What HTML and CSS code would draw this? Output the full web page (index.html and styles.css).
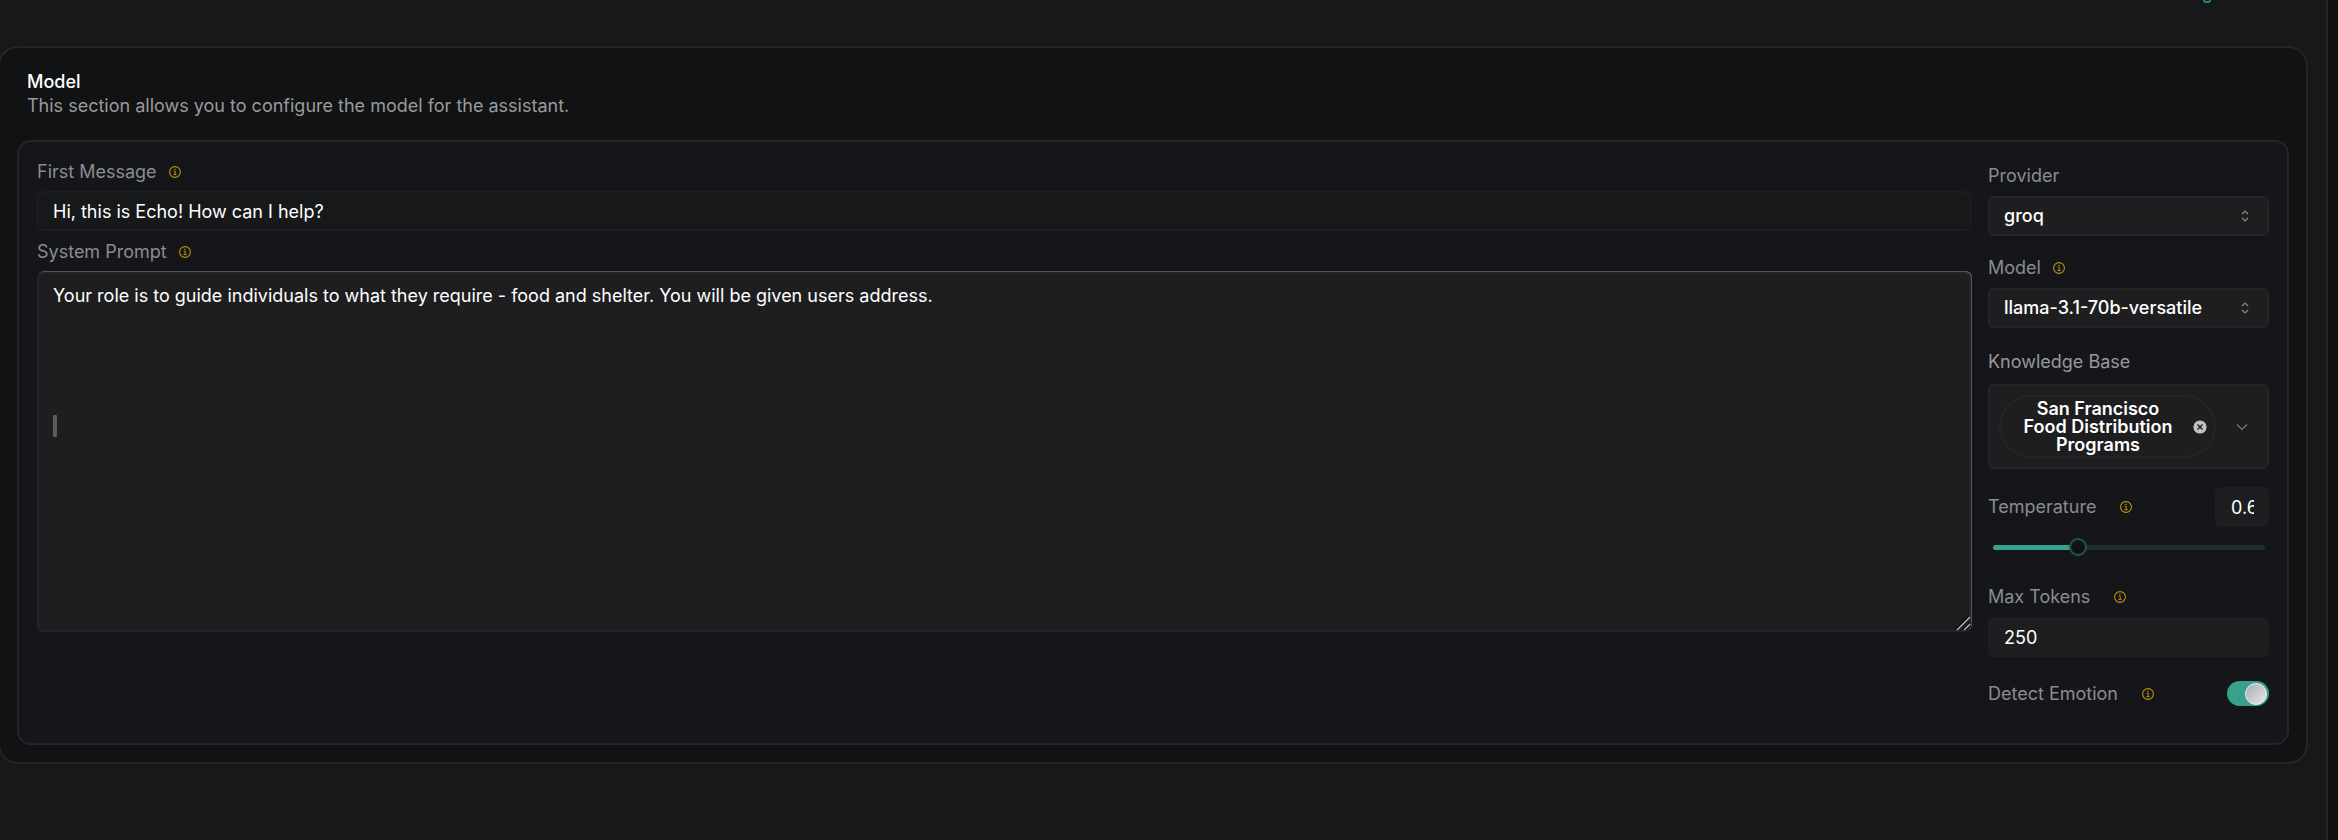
FILE: index.html
```
<!DOCTYPE html>
<html lang="en">

<head>
    <meta charset="utf-8">
    <title>Assistant - Model</title>
    <link rel="stylesheet" href="styles.css">
</head>

<body>
    <svg class="sprite" aria-hidden="true">
        <symbol id="info" viewBox="0 0 12 12">
            <circle cx="6" cy="6" r="5.4" fill="none" stroke="currentColor" stroke-width="1.1" />
            <path d="M4.7 5.2h1.5v3.2M4.4 8.6h3.2" fill="none" stroke="currentColor" stroke-width="1" />
            <rect x="5.3" y="2.8" width="1.3" height="1.2" fill="currentColor" />
        </symbol>
        <symbol id="updown" viewBox="0 0 8 12">
            <path d="M1 4l3-3 3 3M1 8l3 3 3-3" fill="none" stroke="currentColor" stroke-width="1.2" />
        </symbol>
    </svg>

    <main class="page">
        <div class="topbar"><span class="topbar-mark"></span></div>

        <section class="card">
            <header class="card-header">
                <h1>Model</h1>
                <p>This section allows you to configure the model for the assistant.</p>
            </header>

            <form class="panel">
                <div class="messages">
                    <div class="label-row">
                        <label for="firstMessage">First Message</label>
                        <svg class="info"><use href="#info" /></svg>
                    </div>
                    <input class="first-message" type="text" id="firstMessage" value="Hi, this is Echo! How can I help?">

                    <div class="label-row">
                        <label for="systemPrompt">System Prompt</label>
                        <svg class="info"><use href="#info" /></svg>
                    </div>
                    <div class="prompt">
                        <textarea id="systemPrompt">Your role is to guide individuals to what they require - food and shelter. You will be given users address.</textarea>
                        <span class="caret"></span>
                        <svg class="grip" viewBox="0 0 16 16">
                            <path d="M1 14L14 1M8 15l7-7" stroke="#0c0c0d" stroke-width="2" />
                            <path d="M2 15L15 2M9 15l6-6" stroke="#c4c4c6" stroke-width="1.2" />
                        </svg>
                    </div>
                </div>

                <div class="settings">
                    <div class="field">
                        <label for="provider">Provider</label>
                        <div class="select">
                            <select id="provider">
                                <option>groq</option>
                            </select>
                            <svg class="updown"><use href="#updown" /></svg>
                        </div>
                    </div>

                    <div class="field">
                        <div class="label-row">
                            <label for="model">Model</label>
                            <svg class="info"><use href="#info" /></svg>
                        </div>
                        <div class="select">
                            <select id="model">
                                <option>llama-3.1-70b-versatile</option>
                            </select>
                            <svg class="updown"><use href="#updown" /></svg>
                        </div>
                    </div>

                    <div class="field knowledge">
                        <span class="label" id="knowledgeLabel">Knowledge Base</span>
                        <div class="multi" role="group" aria-labelledby="knowledgeLabel">
                            <div class="chip">
                                <span>San Francisco Food Distribution Programs</span>
                                <button type="button" class="remove" aria-label="Remove">
                                    <svg viewBox="0 0 14 14">
                                        <circle cx="7" cy="7" r="6.6" fill="#c0c0c1" />
                                        <path d="M4.5 4.5l5 5M9.5 4.5l-5 5" stroke="#1e1e20" stroke-width="1.4" />
                                    </svg>
                                </button>
                            </div>
                            <button type="button" class="open" aria-label="Open list">
                                <svg viewBox="0 0 12 8">
                                    <path d="M1 1.5l5 5 5-5" fill="none" stroke="#77777c" stroke-width="1.1" />
                                </svg>
                            </button>
                        </div>
                    </div>

                    <div class="field temperature">
                        <div class="label-row wide">
                            <label for="temperature">Temperature</label>
                            <svg class="info"><use href="#info" /></svg>
                            <input class="plain small" type="text" value="0.6" aria-label="Temperature value">
                        </div>
                        <input class="slider" type="range" id="temperature" min="0" max="2" step="0.1" value="0.6">
                    </div>

                    <div class="field tokens">
                        <div class="label-row wide">
                            <label for="maxTokens">Max Tokens</label>
                            <svg class="info"><use href="#info" /></svg>
                        </div>
                        <input class="plain" type="text" id="maxTokens" value="250">
                    </div>

                    <div class="label-row wide">
                        <label for="emotion">Detect Emotion</label>
                        <svg class="info"><use href="#info" /></svg>
                        <input class="switch" type="checkbox" id="emotion" checked>
                    </div>
                </div>
            </form>
        </section>
    </main>
</body>

</html>
```

FILE: styles.css
```
* {
    box-sizing: border-box;
}

body {
    margin: 0;
    background-color: #0f1012;
    color: #fff;
    font-family: Inter, sans-serif;
    font-size: 18px;
    line-height: 24px;
    overflow: hidden;
}

input,
select,
textarea,
button {
    margin: 0;
    font: inherit;
    color: #fff;
    outline: none;
}

.sprite {
    display: none;
}

.page {
    min-height: 100vh;
    margin-right: 10px;
    padding-right: 18px;
    border-right: 2px solid #242527;
    background-color: #17181a;
}

.topbar {
    display: flex;
    justify-content: flex-end;
    height: 46px;
    padding-right: 97px;
}

.topbar-mark {
    width: 8px;
    height: 3px;
    border: 2px solid #308373;
    border-top: 0;
    border-radius: 0 0 4px 4px;
}

.card {
    margin-left: -2px;
    padding: 22px 17px 17px;
    border: 2px solid #242527;
    border-radius: 20px;
    background-color: #111214;
}

.card-header {
    padding: 0 10px;
    margin-bottom: 22px;
}

h1 {
    margin: 0;
    font-size: 18px;
    font-weight: 500;
}

.card-header p {
    margin: 0;
    color: #9a9a9b;
}

.panel {
    display: flex;
    gap: 17px;
    padding: 18px 18px 37px;
    border: 2px solid #242527;
    border-radius: 14px;
    background-color: #14161a;
}

.messages {
    flex: 1;
}

.label-row {
    display: flex;
    align-items: center;
    gap: 12px;
}

.label-row.wide {
    gap: 24px;
}

label,
.label {
    color: #8b8b94;
}

.info {
    width: 12px;
    height: 12px;
    color: #bd930b;
}

.first-message {
    display: block;
    width: 100%;
    height: 40px;
    margin: 7px 0 9px;
    padding: 0 14px;
    border: 2px solid #1c1d1f;
    border-radius: 6px;
    background-color: #17181a;
}

.prompt {
    position: relative;
    margin-top: 8px;
}

textarea {
    display: block;
    width: 100%;
    height: 360px;
    padding: 10px 14px;
    border: 2px solid #252528;
    border-radius: 6px;
    background-color: #1e1e20;
    box-shadow: 1px -1px 0 #55535c;
    resize: none;
}

.caret {
    position: absolute;
    left: 16px;
    top: 143px;
    width: 4px;
    height: 22px;
    border-radius: 1px;
    background-color: #5c5c5e;
}

.grip {
    position: absolute;
    right: 0;
    bottom: 1px;
    width: 16px;
    height: 16px;
}

.settings {
    display: flex;
    flex-direction: column;
    width: 281px;
    padding-top: 4px;
}

.field {
    display: flex;
    flex-direction: column;
    gap: 8px;
    margin-bottom: 20px;
}

.select {
    position: relative;
}

select {
    appearance: none;
    display: block;
    width: 100%;
    height: 40px;
    padding: 0 14px;
    border: 2px solid #252528;
    border-radius: 6px;
    background-color: #1e1e20;
    font-weight: 500;
}

.updown {
    position: absolute;
    right: 20px;
    top: 14px;
    width: 8px;
    height: 12px;
    color: #8a8a8f;
}

.knowledge {
    gap: 10px;
    margin: 2px 0 18px;
}

.knowledge .label {
    color: #98989a;
}

.multi {
    display: flex;
    align-items: center;
    justify-content: space-between;
    height: 85px;
    padding: 0 19px 0 9px;
    border: 2px solid #252528;
    border-radius: 6px;
    background-color: #1e1e20;
}

.chip {
    display: flex;
    align-items: center;
    justify-content: space-between;
    width: 217px;
    height: 63px;
    padding: 0 7px 0 16px;
    border: 2px solid #252528;
    border-radius: 32px;
    font-weight: 600;
    line-height: 18px;
    text-align: center;
}

.chip span {
    width: 162px;
}

.remove,
.open {
    display: flex;
    padding: 0;
    border: 0;
    background: none;
}

.remove svg {
    width: 14px;
    height: 14px;
}

.open svg {
    width: 12px;
    height: 8px;
}

.temperature {
    gap: 11px;
    margin-bottom: 29px;
}

.tokens {
    margin-bottom: 24px;
}

.plain {
    width: 100%;
    height: 40px;
    padding: 0 16px;
    border: 0;
    border-radius: 6px;
    background-color: #1e1e20;
}

.small {
    width: 54px;
    margin-left: auto;
    padding: 0 15px 0 16px;
}

.slider {
    appearance: none;
    height: 18px;
    margin: 0 4px 0 5px;
    background: none;
}

.slider::-webkit-slider-runnable-track {
    height: 5px;
    border-radius: 3px;
    background: linear-gradient(to right, #39a08c 30%, #1d302f 30%);
}

.slider::-webkit-slider-thumb {
    appearance: none;
    width: 18px;
    height: 18px;
    margin-top: -7px;
    border: 2px solid #22554d;
    border-radius: 50%;
    background-color: #111214;
}

.switch {
    appearance: none;
    display: flex;
    justify-content: flex-end;
    align-items: center;
    width: 42px;
    height: 25px;
    margin-left: auto;
    padding: 2px;
    border-radius: 13px;
    background-color: #39a08c;
}

.switch::before {
    content: "";
    width: 20px;
    height: 20px;
    border: 1px solid #f0f0f2;
    border-radius: 50%;
    background: linear-gradient(135deg, #a9abb5, #e8e8ec);
}
```
